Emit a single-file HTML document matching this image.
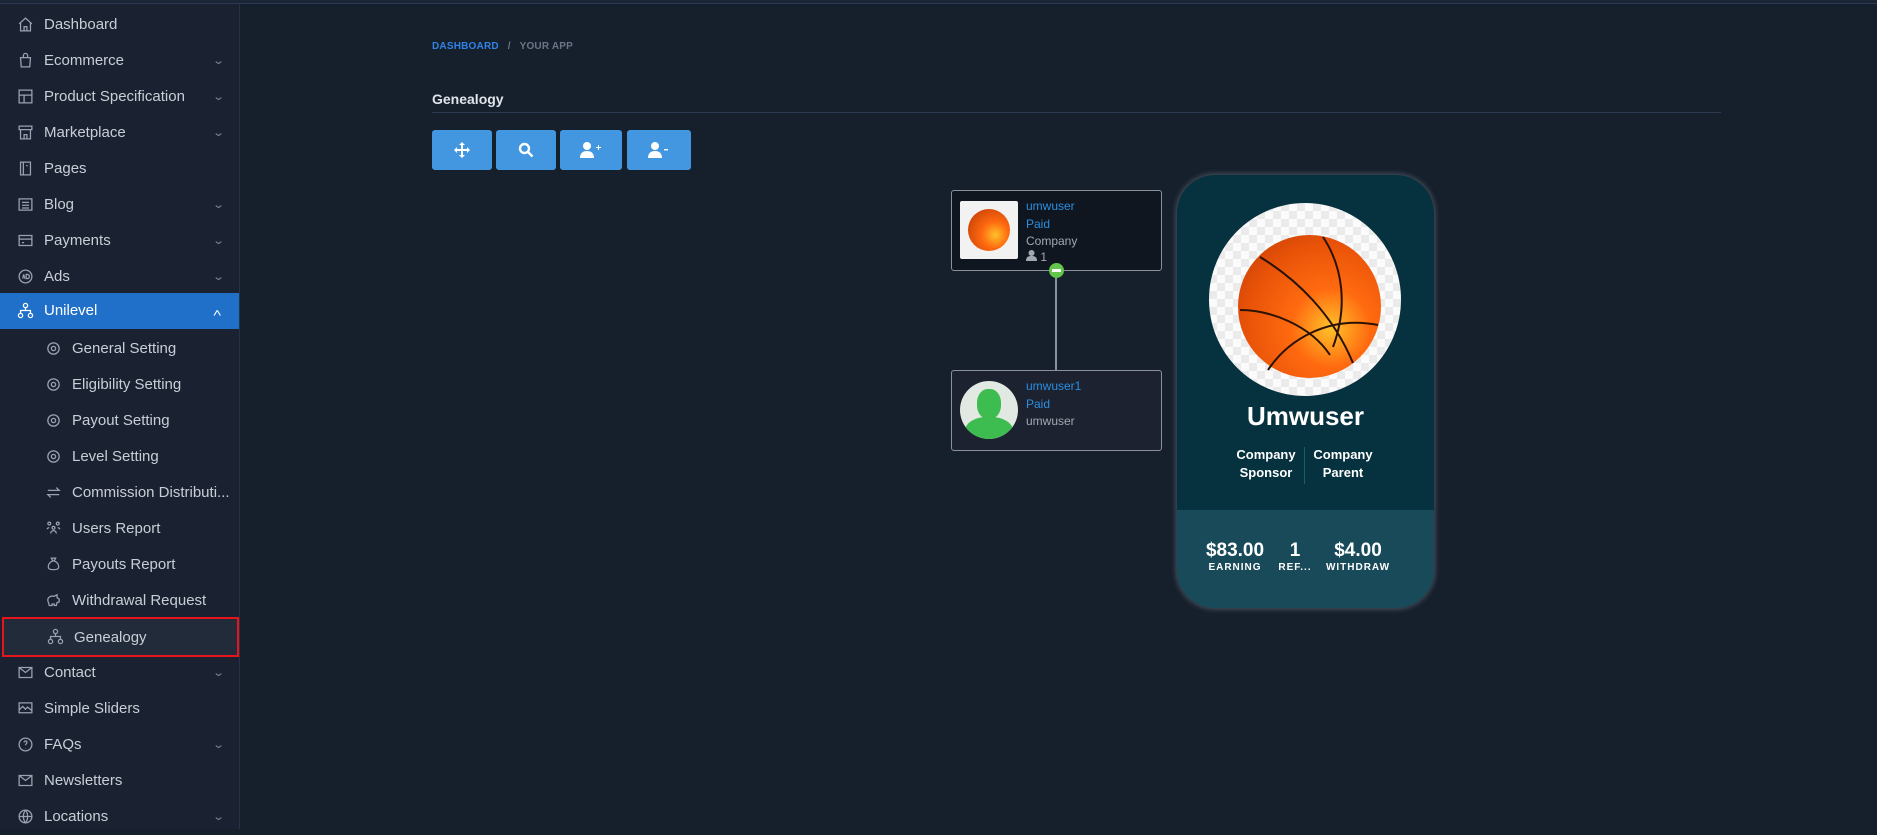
<!DOCTYPE html>
<html><head><meta charset="utf-8"><style>
*{margin:0;padding:0;box-sizing:border-box}
body{width:1877px;height:829px;background:#161f2c;font-family:"Liberation Sans",sans-serif;position:relative;overflow:hidden}
.top{position:absolute;left:0;top:0;width:1877px;height:4px;background:#1b2535;border-bottom:1px solid #2a3a52}
.side{position:absolute;left:0;top:4px;width:240px;height:825px;background:#1a2232;border-right:1px solid #273246}
.it{position:absolute;left:0;width:239px;height:36px;color:#c9ced6;font-size:15px;line-height:36px}
.it .t{position:absolute;left:44px}
.it.s .t{left:72px}
.it svg{position:absolute;top:9px;left:17px}
.it.s svg{left:45px}
.ch{position:absolute;left:214px;top:0;color:#7d8594;font-size:11px;transform:scaleX(1.4)}
.act{background:#206fc8;color:#fff}
.txt{position:absolute;white-space:nowrap}
.btn{position:absolute;top:130px;height:40px;background:#4297e0;border-radius:3px}
.node{position:absolute;left:951px;width:211px;border:1.5px solid #8c9199;border-radius:3px}
</style></head><body>
<div class="top"></div>
<div class="side">
<div class="it" style="top:3px"><svg width="17" height="17" viewBox="0 0 24 24" fill="none" stroke="#9aa2b0" stroke-width="1.8"><path d="M3 11l9-8 9 8M5 9v12h14V9M10 21v-6h4v6"/></svg><span class="t">Dashboard</span></div>
<div class="it" style="top:39px"><svg width="17" height="17" viewBox="0 0 24 24" fill="none" stroke="#9aa2b0" stroke-width="1.8"><path d="M5 8h14l-1 13H6zM9 8V5a3 3 0 016 0v3"/></svg><span class="t">Ecommerce</span><span class="ch">⌄</span></div>
<div class="it" style="top:75px"><svg width="17" height="17" viewBox="0 0 24 24" fill="none" stroke="#9aa2b0" stroke-width="1.8"><path d="M3 3h18v18H3zM3 10h18M10 10v11"/></svg><span class="t">Product Specification</span><span class="ch">⌄</span></div>
<div class="it" style="top:111px"><svg width="17" height="17" viewBox="0 0 24 24" fill="none" stroke="#9aa2b0" stroke-width="1.8"><path d="M3 3h18v5H3zM5 8v13h14V8M10 21v-6h4v6"/></svg><span class="t">Marketplace</span><span class="ch">⌄</span></div>
<div class="it" style="top:147px"><svg width="17" height="17" viewBox="0 0 24 24" fill="none" stroke="#9aa2b0" stroke-width="1.8"><path d="M5 3h14v18H5zM9 3v18M13 8h2"/></svg><span class="t">Pages</span></div>
<div class="it" style="top:183px"><svg width="17" height="17" viewBox="0 0 24 24" fill="none" stroke="#9aa2b0" stroke-width="1.8"><path d="M3 4h18v16H3zM7 9h10M7 13h10M7 17h10"/></svg><span class="t">Blog</span><span class="ch">⌄</span></div>
<div class="it" style="top:219px"><svg width="17" height="17" viewBox="0 0 24 24" fill="none" stroke="#9aa2b0" stroke-width="1.8"><path d="M3 5h18v14H3zM3 10h18M7 15h3"/></svg><span class="t">Payments</span><span class="ch">⌄</span></div>
<div class="it" style="top:255px"><svg width="17" height="17" viewBox="0 0 24 24" fill="none" stroke="#9aa2b0" stroke-width="1.8"><circle cx="12" cy="12" r="9"/><path d="M8 15l1.5-6 1.5 6M13 9v6h1.5a3 3 0 000-6z"/></svg><span class="t">Ads</span><span class="ch">⌄</span></div>
<div class="it act" style="top:289px;color:#fff"><svg width="17" height="17" viewBox="0 0 24 24" fill="none" stroke="#fff" stroke-width="1.8"><circle cx="12" cy="5" r="3"/><circle cx="5" cy="19" r="3"/><circle cx="19" cy="19" r="3"/><path d="M12 8v4M5 16v-4h14v4"/></svg><span class="t">Unilevel</span><span class="ch" style="color:#fff;top:3px">˄</span></div>
<div class="it s" style="top:327px"><svg width="17" height="17" viewBox="0 0 24 24" fill="none" stroke="#9aa2b0" stroke-width="1.8"><circle cx="12" cy="12" r="3"/><circle cx="12" cy="12" r="8"/></svg><span class="t">General Setting</span></div>
<div class="it s" style="top:363px"><svg width="17" height="17" viewBox="0 0 24 24" fill="none" stroke="#9aa2b0" stroke-width="1.8"><circle cx="12" cy="12" r="3"/><circle cx="12" cy="12" r="8"/></svg><span class="t">Eligibility Setting</span></div>
<div class="it s" style="top:399px"><svg width="17" height="17" viewBox="0 0 24 24" fill="none" stroke="#9aa2b0" stroke-width="1.8"><circle cx="12" cy="12" r="3"/><circle cx="12" cy="12" r="8"/></svg><span class="t">Payout Setting</span></div>
<div class="it s" style="top:435px"><svg width="17" height="17" viewBox="0 0 24 24" fill="none" stroke="#9aa2b0" stroke-width="1.8"><circle cx="12" cy="12" r="3"/><circle cx="12" cy="12" r="8"/></svg><span class="t">Level Setting</span></div>
<div class="it s" style="top:471px"><svg width="17" height="17" viewBox="0 0 24 24" fill="none" stroke="#9aa2b0" stroke-width="1.8"><path d="M4 9h16l-4-4M20 15H4l4 4"/></svg><span class="t">Commission Distributi...</span></div>
<div class="it s" style="top:507px"><svg width="17" height="17" viewBox="0 0 24 24" fill="none" stroke="#9aa2b0" stroke-width="1.8"><circle cx="12" cy="11" r="2"/><circle cx="6" cy="5" r="2"/><circle cx="18" cy="5" r="2"/><path d="M8 19a4 4 0 018 0M3 13a3 3 0 013-2M21 13a3 3 0 00-3-2"/></svg><span class="t">Users Report</span></div>
<div class="it s" style="top:543px"><svg width="17" height="17" viewBox="0 0 24 24" fill="none" stroke="#9aa2b0" stroke-width="1.8"><path d="M9 3h6l-2 4h-2zM11 7c-5 2-7 6-6 10 1 3 13 3 14 0 1-4-1-8-6-10"/></svg><span class="t">Payouts Report</span></div>
<div class="it s" style="top:579px"><svg width="17" height="17" viewBox="0 0 24 24" fill="none" stroke="#9aa2b0" stroke-width="1.8"><path d="M4 11c0-4 5-6 9-5l4-2v4l3 2v4l-3 1-1 4h-3v-2h-3v2H6l-1-4c-1-1-1-3-1-4z"/></svg><span class="t">Withdrawal Request</span></div>
<div class="it s" style="top:613px;height:40px;line-height:38px;left:2px;width:237px;border:2px solid #e8141c;background:#222b3a"><svg width="17" height="17" viewBox="0 0 24 24" fill="none" stroke="#9aa2b0" stroke-width="1.8" style="top:9px;left:43px"><circle cx="12" cy="5" r="3"/><circle cx="5" cy="19" r="3"/><circle cx="19" cy="19" r="3"/><path d="M12 8v4M5 16v-4h14v4"/></svg><span class="t" style="left:70px">Genealogy</span></div>
<div class="it" style="top:651px"><svg width="17" height="17" viewBox="0 0 24 24" fill="none" stroke="#9aa2b0" stroke-width="1.8"><path d="M3 5h18v14H3zM3 5l9 7 9-7"/></svg><span class="t">Contact</span><span class="ch">⌄</span></div>
<div class="it" style="top:687px"><svg width="17" height="17" viewBox="0 0 24 24" fill="none" stroke="#9aa2b0" stroke-width="1.8"><path d="M3 4h18v14H3zM3 14l5-5 4 4 3-3 6 5"/></svg><span class="t">Simple Sliders</span></div>
<div class="it" style="top:723px"><svg width="17" height="17" viewBox="0 0 24 24" fill="none" stroke="#9aa2b0" stroke-width="1.8"><circle cx="12" cy="12" r="9"/><path d="M10 9a2 2 0 114 0c0 2-2 2-2 4M12 17v.5"/></svg><span class="t">FAQs</span><span class="ch">⌄</span></div>
<div class="it" style="top:759px"><svg width="17" height="17" viewBox="0 0 24 24" fill="none" stroke="#9aa2b0" stroke-width="1.8"><path d="M3 5h18v14H3zM3 5l9 7 9-7"/></svg><span class="t">Newsletters</span></div>
<div class="it" style="top:795px"><svg width="17" height="17" viewBox="0 0 24 24" fill="none" stroke="#9aa2b0" stroke-width="1.8"><circle cx="12" cy="12" r="9"/><path d="M3 12h18M12 3c-4 5-4 13 0 18M12 3c4 5 4 13 0 18"/></svg><span class="t">Locations</span><span class="ch">⌄</span></div>
</div>

<div class="txt" style="left:432px;top:41px;font-size:10px;font-weight:bold;color:#2f83e6;letter-spacing:.2px">DASHBOARD <span style="color:#6b7585;margin:0 6px">/</span> <span style="color:#6b7585">YOUR APP</span></div>
<div class="txt" style="left:432px;top:91px;font-size:14px;font-weight:bold;color:#e1e5ea">Genealogy</div>
<div style="position:absolute;left:432px;top:112px;width:1289px;height:1px;background:#2b3a52"></div>

<div class="btn" style="left:432px;width:60px"><svg style="position:absolute;left:22px;top:12px" width="16" height="16" viewBox="0 0 16 16" fill="#fff"><path d="M8 0l3 3H9v4h4V5l3 3-3 3V9H9v4h2l-3 3-3-3h2V9H3v2L0 8l3-3v2h4V3H5z"/></svg></div>
<div class="btn" style="left:496px;width:60px"><svg style="position:absolute;left:22px;top:12px" width="16" height="16" viewBox="0 0 16 16" fill="none" stroke="#fff" stroke-width="2.4"><circle cx="6.5" cy="6.5" r="4.5"/><path d="M10 10l4.5 4.5"/></svg></div>
<div class="btn" style="left:560px;width:62px"><svg style="position:absolute;left:20px;top:12px" width="22" height="16" viewBox="0 0 22 16" fill="#fff"><circle cx="7" cy="4" r="4"/><path d="M0 16c0-5 3-7 7-7s7 2 7 7z"/><path d="M16 5h2V3h1v2h2v1h-2v2h-1V6h-2z"/></svg></div>
<div class="btn" style="left:627px;width:64px"><svg style="position:absolute;left:21px;top:12px" width="22" height="16" viewBox="0 0 22 16" fill="#fff"><circle cx="7" cy="4" r="4"/><path d="M0 16c0-5 3-7 7-7s7 2 7 7z"/><path d="M16 7h4v1.4h-4z"/></svg></div>

<!-- node 1 -->
<div class="node" style="top:190px;height:81px;background:#0f1620">
 <div style="position:absolute;left:8px;top:10px;width:58px;height:58px;background:#f2f2f2;border-radius:2px">
  <div style="position:absolute;left:8px;top:8px;width:42px;height:42px;border-radius:50%;background:radial-gradient(circle at 65% 62%,#ffc22a,#ff6a10 35%,#c23d05 90%)"></div>
 </div>
 <div class="txt" style="left:74px;top:8px;font-size:12px;color:#2b8ee0">umwuser</div>
 <div class="txt" style="left:74px;top:26px;font-size:12px;color:#2b8ee0">Paid</div>
 <div class="txt" style="left:74px;top:43px;font-size:12px;color:#a3a8b0">Company</div>
 <div class="txt" style="left:74px;top:59px;font-size:12px;color:#a3a8b0"><svg width="11" height="11" viewBox="0 0 11 11" fill="#a3a8b0"><circle cx="5.5" cy="3" r="3"/><path d="M0 11c0-4 2-5 5.5-5S11 7 11 11z"/></svg> 1</div>
</div>
<div style="position:absolute;left:1055px;top:272px;width:2px;height:98px;background:#8c9199"></div>
<div style="position:absolute;left:1049px;top:263px;width:15px;height:15px;border-radius:50%;background:#63c54b"><div style="position:absolute;left:3px;top:6px;width:9px;height:3px;background:#fff"></div></div>
<!-- node 2 -->
<div class="node" style="top:370px;height:81px;background:#1c2230">
 <div style="position:absolute;left:8px;top:10px;width:58px;height:58px;border-radius:50%;background:#e2e8e2;overflow:hidden">
  <div style="position:absolute;left:17px;top:8px;width:24px;height:30px;border-radius:45%;background:#3dbd4f"></div>
  <div style="position:absolute;left:5px;top:36px;width:48px;height:30px;border-radius:45% 45% 0 0;background:#3dbd4f"></div>
 </div>
 <div class="txt" style="left:74px;top:8px;font-size:12px;color:#2b8ee0">umwuser1</div>
 <div class="txt" style="left:74px;top:26px;font-size:12px;color:#2b8ee0">Paid</div>
 <div class="txt" style="left:74px;top:43px;font-size:12px;color:#a3a8b0">umwuser</div>
</div>

<!-- big card -->
<div style="position:absolute;left:1177px;top:175px;width:257px;height:433px;border-radius:38px;overflow:hidden;background:#06313f;box-shadow:0 0 6px 1px rgba(180,190,200,.35)">
 <div style="position:absolute;left:0;top:335px;width:257px;height:100px;background:#194a5a"></div>
 <div style="position:absolute;left:32px;top:28px;width:192px;height:193px;border-radius:50%;background:repeating-conic-gradient(#ebebeb 0 25%,#fbfbfb 0 50%) 0 0/16px 16px"></div>
 <div style="position:absolute;left:61px;top:60px;width:143px;height:143px;border-radius:50%;background:radial-gradient(circle at 65% 65%,#ffc22a,#ff6a10 30%,#e85208 65%,#b93a06 100%)">
  <svg width="143" height="143" viewBox="0 0 143 143" fill="none" stroke="#2a1205" stroke-width="2"><path d="M22 22C60 45 95 80 115 128"/><path d="M2 75c30 0 70 15 90 45"/><path d="M85 2c20 30 25 70 10 110"/><path d="M30 135c20-30 60-55 110-45"/></svg>
 </div>
 <div class="txt" style="left:0;width:257px;text-align:center;top:226px;font-size:26px;font-weight:bold;color:#fff">Umwuser</div>
 <div class="txt" style="left:40px;width:98px;text-align:center;top:271px;font-size:13px;font-weight:bold;color:#fff;line-height:18px">Company<br>Sponsor</div>
 <div style="position:absolute;left:127px;top:272px;width:1px;height:37px;background:#1d5a6c"></div>
 <div class="txt" style="left:117px;width:98px;text-align:center;top:271px;font-size:13px;font-weight:bold;color:#fff;line-height:18px">Company<br>Parent</div>
 <div class="txt" style="left:18px;width:80px;text-align:center;top:365px;font-size:19px;font-weight:bold;color:#fff">$83.00</div>
 <div class="txt" style="left:18px;width:80px;text-align:center;top:387px;font-size:10px;font-weight:bold;color:#fff;letter-spacing:1px">EARNING</div>
 <div class="txt" style="left:98px;width:40px;text-align:center;top:365px;font-size:19px;font-weight:bold;color:#fff">1</div>
 <div class="txt" style="left:98px;width:40px;text-align:center;top:387px;font-size:10px;font-weight:bold;color:#fff;letter-spacing:1px">REF...</div>
 <div class="txt" style="left:136px;width:90px;text-align:center;top:365px;font-size:19px;font-weight:bold;color:#fff">$4.00</div>
 <div class="txt" style="left:136px;width:90px;text-align:center;top:387px;font-size:10px;font-weight:bold;color:#fff;letter-spacing:1px">WITHDRAW</div>
</div>
</body></html>
